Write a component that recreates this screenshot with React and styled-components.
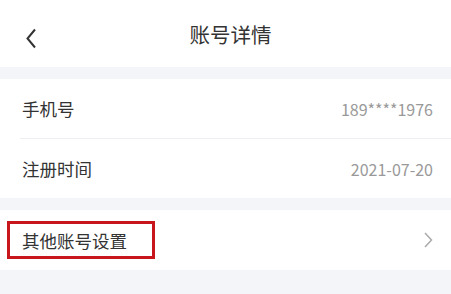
import styled, { createGlobalStyle } from 'styled-components';

const GlobalStyle = createGlobalStyle`
  html, body {
    margin: 0;
    padding: 0;
    background: #f4f5f8;
    font-family: "Noto Sans CJK SC", "Noto Sans", sans-serif;
  }
`;

const Page = styled.div`
  width: 451px;
  height: 294px;
  background: #f4f5f8;
  overflow: hidden;
`;

const Header = styled.div`
  position: relative;
  height: 67px;
  background: #fff;
  display: flex;
  align-items: center;
  justify-content: center;
`;

const BackBtn = styled.div`
  position: absolute;
  left: 25px;
  top: 28px;
  width: 12px;
  height: 21px;
  display: flex;
`;

const Title = styled.h1`
  margin: 0;
  padding-left: 10px;
  font-size: 20.5px;
  font-weight: 400;
  color: #333;
`;

const Group = styled.div`
  margin-top: ${p => p.gap}px;
  background: #fff;
`;

const Row = styled.div`
  height: ${p => p.h || 59}px;
  margin-left: 20px;
  padding-right: 18px;
  display: flex;
  align-items: center;
  justify-content: space-between;
  border-bottom: ${p => (p.divider ? '1px solid #eeeff2' : 'none')};
`;

const Label = styled.span`
  font-size: 17.5px;
  color: #333;
  padding-left: 2px;
`;

const Value = styled.span`
  font-size: 16px;
  color: #999;
`;

const Outlined = styled.div`
  margin-left: -13px;
  width: 132px;
  height: 32px;
  border: 3px solid #c8161d;
  display: flex;
  align-items: center;
  padding-left: 10px;
  box-sizing: content-box;
`;

function App() {
  return (
    <Page>
      <GlobalStyle />
      <Header>
        <BackBtn>
          <svg width="12" height="21" viewBox="0 0 12 21">
            <path d="M10 1.5 L2.5 10.5 L10 19.5" fill="none" stroke="#333" strokeWidth="2" />
          </svg>
        </BackBtn>
        <Title>账号详情</Title>
      </Header>
      <Group gap={12}>
        <Row divider>
          <Label>手机号</Label>
          <Value>189****1976</Value>
        </Row>
        <Row>
          <Label>注册时间</Label>
          <Value>2021-07-20</Value>
        </Row>
      </Group>
      <Group gap={12}>
        <Row h={60}>
          <Outlined>
            <Label>其他账号设置</Label>
          </Outlined>
          <svg width="10" height="16" viewBox="0 0 10 16">
            <path d="M2 1 L8.5 8 L2 15" fill="none" stroke="#aaa" strokeWidth="1.5" />
          </svg>
        </Row>
      </Group>
    </Page>
  );
}

export default App;
